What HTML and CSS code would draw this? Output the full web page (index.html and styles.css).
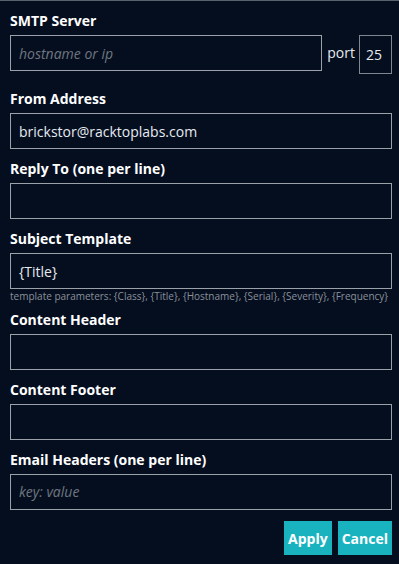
FILE: index.html
```html
<!DOCTYPE html>
<html>
<head>
<meta charset="utf-8">
<link rel="stylesheet" href="styles.css">
</head>
<body>
<div class="form">
  <div class="field">
    <label class="label first">SMTP Server</label>
    <div class="row">
      <input class="input grow" placeholder="hostname or ip">
      <span class="port-label">port</span>
      <input class="input port" value="25">
    </div>
  </div>
  <div class="field">
    <label class="label after-row">From Address</label>
    <input class="input" value="brickstor@racktoplabs.com">
  </div>
  <div class="field">
    <label class="label">Reply To (one per line)</label>
    <textarea class="input area"></textarea>
  </div>
  <div class="field">
    <label class="label">Subject Template</label>
    <input class="input" value="{Title}">
    <div class="hint">template parameters: {Class}, {Title}, {Hostname}, {Serial}, {Severity}, {Frequency}</div>
  </div>
  <div class="field">
    <label class="label">Content Header</label>
    <textarea class="input area"></textarea>
  </div>
  <div class="field">
    <label class="label">Content Footer</label>
    <textarea class="input area"></textarea>
  </div>
  <div class="field">
    <label class="label">Email Headers (one per line)</label>
    <textarea class="input area" placeholder="key: value"></textarea>
  </div>
  <div class="actions">
    <button class="btn">Apply</button>
    <button class="btn">Cancel</button>
  </div>
</div>
</body>
</html>
```
FILE: styles.css
```css
html, body {
  margin: 0;
  padding: 0;
  background: #050e1f;
}
body {
  border-top: 1px solid #59616d;
  height: 563px;
  font-family: "Open Sans", "Noto Sans", sans-serif;
  color: #e6ebf0;
}
.form {
  padding: 0 7px 0 10px;
  display: flex;
  flex-direction: column;
}
.field {
  display: flex;
  flex-direction: column;
}
.label {
  font-weight: bold;
  font-size: 14px;
  line-height: 20px;
  height: 34px;
  display: flex;
  align-items: flex-end;
  padding-bottom: 4px;
  box-sizing: border-box;
  color: #ffffff;
}
.label.after-row {
  height: 39px;
}
.row {
  display: flex;
  align-items: flex-start;
}
.input {
  box-sizing: border-box;
  height: 36px;
  background: #050e1f;
  border: 1px solid #9aa1a9;
  color: #e6ebf0;
  font-family: inherit;
  font-size: 14px;
  padding: 0 8px;
  margin: 0;
  outline: none;
  display: block;
  width: 100%;
}
.area {
  resize: none;
  padding: 8px;
  line-height: 18px;
}
.input::placeholder {
  color: #6f7780;
  font-style: italic;
}
.grow {
  flex: 1;
  width: auto;
  min-width: 0;
}
.port-label {
  font-size: 14px;
  line-height: 36px;
  margin: 0 4px 0 5px;
  color: #e6ebf0;
}
.port {
  width: 33px;
  height: 39px;
  padding: 0 6px;
  border-color: #7f8790;
}
.hint {
  font-size: 10px;
  color: #8a919a;
  line-height: 14px;
  white-space: nowrap;
  height: 11px;
}
.actions {
  display: flex;
  justify-content: flex-end;
  gap: 6px;
  margin-top: 11px;
}
.btn {
  background: #19b3bf;
  color: #ffffff;
  border: none;
  font-family: inherit;
  font-weight: bold;
  font-size: 14px;
  height: 34px;
  padding: 0 4px;
  margin: 0;
}
```
